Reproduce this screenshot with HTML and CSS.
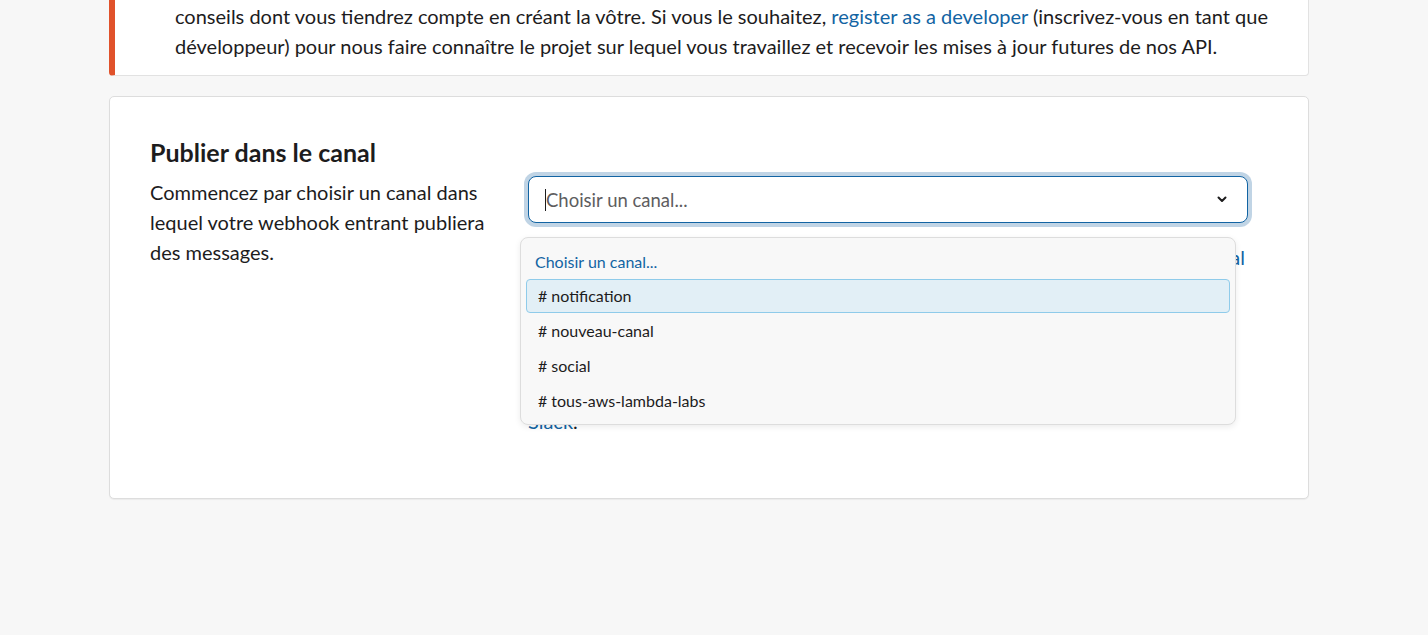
FILE: index.html
```html
<!DOCTYPE html>
<html lang="fr">
<head>
<meta charset="utf-8">
<title>Publier dans le canal</title>
<link rel="stylesheet" href="styles.css">
</head>
<body>
<div class="page">
  <div class="callout">
    <p>conseils dont vous tiendrez compte en créant la vôtre. Si vous le souhaitez, <a href="#">register as a developer</a> (inscrivez-vous en tant que développeur) pour nous faire connaître le projet sur lequel vous travaillez et recevoir les mises à jour futures de nos API.</p>
  </div>

  <div class="card">
    <div class="col-left">
      <h3>Publier dans le canal</h3>
      <p>Commencez par choisir un canal dans lequel votre webhook entrant publiera des messages.</p>
    </div>
    <div class="col-right">
      <div class="select-wrap">
        <div class="select">
          <span class="caret"></span>
          <span class="placeholder">Choisir un canal...</span>
          <svg class="chevron" width="10" height="7" viewBox="0 0 10 7"><path d="M1.5 1.5 L5 5 L8.5 1.5" fill="none" stroke="#1d1c1d" stroke-width="2" stroke-linecap="round" stroke-linejoin="round"/></svg>
        </div>
        <div class="menu">
          <div class="menu-head">Choisir un canal...</div>
          <div class="opt active"><span class="hash">#</span>notification</div>
          <div class="opt"><span class="hash">#</span>nouveau-canal</div>
          <div class="opt"><span class="hash">#</span>social</div>
          <div class="opt"><span class="hash">#</span>tous-aws-lambda-labs</div>
        </div>
      </div>
      <p class="note lead">Vous pouvez aussi publier dans une conversation ou <a href="#">un canal</a></p>
      <p class="note rest">Les messages envoyés par votre webhook apparaîtront<br>dans le canal choisi, avec le nom et l'icône de votre<br>application. Vous pourrez modifier ces paramètres<br>plus tard depuis la page de configuration de l'app<br><a href="#">Slack</a>.</p>
    </div>
  </div>
</div>
</body>
</html>
```

FILE: styles.css
```css
html, body {
  margin: 0;
  padding: 0;
  background: #f7f7f7;
}
body {
  font-family: Lato, "Noto Sans", sans-serif;
  color: #1d1c1d;
  font-size: 20px;
  line-height: 30px;
  overflow: hidden;
  height: 635px;
}
a {
  color: #1264a3;
  text-decoration: none;
}
p { margin: 0; }

.page {
  width: 1200px;
  margin-left: 109px;
}

.callout {
  margin-top: -20px;
  background: #fff;
  border: 1px solid #e2e2e2;
  border-left: 6px solid #e0522b;
  border-radius: 4px;
  padding: 20px 38px 14px 60px;
}

.card {
  margin-top: 20px;
  background: #fff;
  border: 1px solid #dddddd;
  border-radius: 5px;
  box-shadow: 0 1px 1px rgba(0,0,0,0.05);
  padding: 39px 40px 60px 40px;
  display: grid;
  grid-template-columns: 340px 720px;
  column-gap: 38px;
  height: 302px;
}

.col-left h3 {
  margin: 0 0 9px 0;
  font-size: 25px;
  line-height: 32px;
  font-weight: 700;
}

.col-right {
  padding-top: 40px;
}

.select-wrap {
  position: relative;
}
.select {
  height: 45px;
  border: 1px solid #1264a3;
  border-radius: 8px;
  box-shadow: 0 0 0 4px rgba(29, 100, 163, 0.28);
  display: flex;
  align-items: center;
  padding: 0 20px 0 16px;
  background: #fff;
}
.caret {
  width: 1px;
  height: 22px;
  background: #1d1c1d;
}
.placeholder {
  flex: 1;
  color: #5e5d60;
  font-size: 18.5px;
}
.chevron {
  display: block;
}

.menu {
  position: absolute;
  left: -8px;
  top: 61px;
  width: 704px;
  background: #f8f8f8;
  border: 1px solid #dddddd;
  border-radius: 8px;
  box-shadow: 0 2px 6px rgba(0,0,0,0.08);
  padding: 6px 5px 5px 5px;
  font-size: 16px;
  z-index: 2;
}
.menu-head {
  height: 35px;
  line-height: 35px;
  padding-left: 9px;
  color: #1264a3;
}
.opt {
  box-sizing: border-box;
  height: 34px;
  line-height: 32px;
  margin-bottom: 1px;
  border: 1px solid transparent;
  border-radius: 4px;
  padding-left: 11px;
  color: #1d1c1d;
}
.opt.active {
  background: #e2eff6;
  border-color: #8fcbea;
}
.hash {
  margin-right: 4px;
}

.note.lead {
  margin-top: 19px;
  padding-right: 3px;
  text-align: justify;
  text-align-last: justify;
}
.note.rest {
  margin-top: 14px;
  max-width: 690px;
}
```
